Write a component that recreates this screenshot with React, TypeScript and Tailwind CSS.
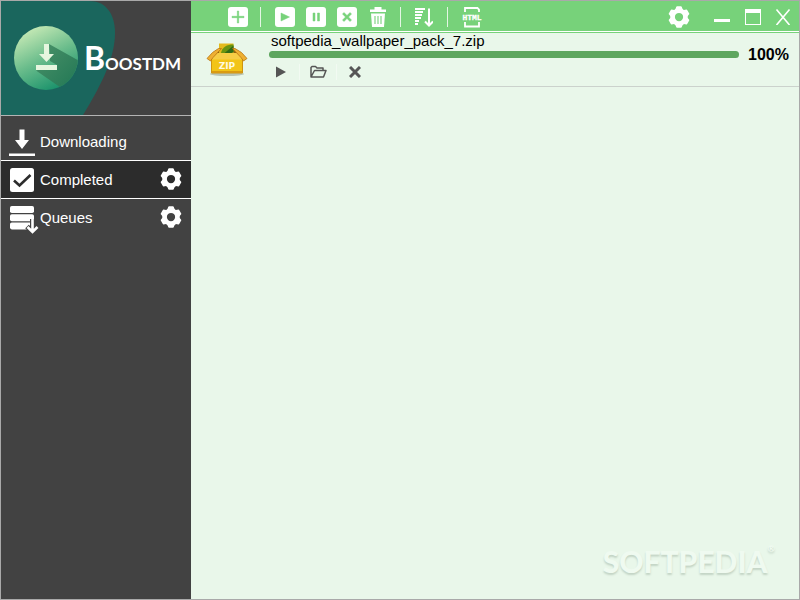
import { useState } from 'react';
import type { ReactNode } from 'react';

const FONT = "font-['Liberation_Sans',Arial,sans-serif]";

function GearIcon({ size, hole }: { size: number; hole: number }) {
  return (
    <svg width={size} height={size} viewBox="0 0 24 24" fill="none" stroke="currentColor">
      <circle cx="12" cy="12" r={(9.5 + hole) / 2} strokeWidth={9.5 - hole} />
      {[0, 60, 120, 180, 240, 300].map(deg => (
        <path
          key={deg}
          d="M9.8 1.2h4.4l1.6 4h-7.6z"
          fill="currentColor"
          strokeWidth="1.6"
          strokeLinejoin="round"
          transform={`rotate(${deg} 12 12)`}
        />
      ))}
    </svg>
  );
}

function LogoIcon() {
  return (
    <svg width="64" height="64" viewBox="0 0 64 64" className="shrink-0">
      <defs>
        <linearGradient id="disc" x1="0.15" y1="0.1" x2="0.6" y2="1">
          <stop offset="0" stopColor="#c3e8b4" />
          <stop offset="0.5" stopColor="#6bbd8c" />
          <stop offset="1" stopColor="#1c936c" />
        </linearGradient>
        <linearGradient id="shade" x1="0" y1="0" x2="1" y2="1">
          <stop offset="0" stopColor="#4b9269" />
          <stop offset="1" stopColor="#1e7553" />
        </linearGradient>
        <clipPath id="discClip"><circle cx="32" cy="32" r="32" /></clipPath>
      </defs>
      <circle cx="32" cy="32" r="32" fill="url(#disc)" />
      <path clipPath="url(#discClip)" d="M35 18l32 18v30H53L22 44.500 43 39l-7-4z" fill="url(#shade)" />
      <path d="M30 18h5v10h5l-7.500 8-7.500-8h5zM22 39h21v5H22z" fill="#e6f6df" />
    </svg>
  );
}

function DownloadIcon() {
  return (
    <svg width="28" height="28" viewBox="0 0 28 28" fill="currentColor">
      <path d="M11.500 1.500h5V12h4.500l-7 9-7-9h4.500zM1 25.500h26V28H1z" />
    </svg>
  );
}

function CheckIcon() {
  return (
    <svg width="28" height="28" viewBox="0 0 28 28">
      <rect x="2" y="2" width="24" height="24" rx="2.500" fill="#fff" />
      <path d="M6 14.500l5.500 5L22.500 9" fill="none" stroke="#2c2c2c" strokeWidth="2.600" />
    </svg>
  );
}

function QueueIcon() {
  return (
    <svg width="28" height="28" viewBox="0 0 28 28">
      <g fill="#fff">
        <rect x="2" y="2" width="24" height="7" rx="1.800" />
        <rect x="2" y="10.200" width="24" height="7" rx="1.800" />
        <rect x="2" y="18.400" width="22" height="7" rx="1.800" />
      </g>
      <path d="M24.500 15v12M19 22.500l5.500 5.500 5.500-5.500" fill="none" stroke="#424242" strokeWidth="5" />
      <path d="M24.500 14v14M19.500 23l5 5 5-5" fill="none" stroke="#fff" strokeWidth="2.600" />
    </svg>
  );
}

function ZipIcon() {
  return (
    <svg width="42" height="34" viewBox="0 0 42 34" className="shrink-0">
      <ellipse cx="21" cy="31" rx="17" ry="2" fill="#b9c5b4" />
      <path d="M7 13l7-7h14l7 7z" fill="#8f6410" />
      <path d="M13 0.500h14.500v11H13z" fill="#e3ba1c" />
      <path d="M15 10c1-6 6-8.500 12.500-8.500V9l-3 1.500h-8z" fill="#6a9410" />
      <path d="M18 10.500l9.500-8V9l-3 1.500z" fill="#2f6a17" />
      <path d="M5.500 14h31v16h-31z" fill="#f2c417" stroke="#cf9410" />
      <path d="M6 14l5-4h20l5 4v2.500H6z" fill="#f6cd45" />
      <path d="M12.500 5.500h3L7 14.500 4.500 18 1 15.500l5.500-6zM29 5.500h-2.500L35 14.500l2.500 3.500 3.500-2.500-5.500-6z" fill="#eeb033" stroke="#b97410" strokeWidth="0.800" />
      <path d="M6 28h30v2H6z" fill="#d99b12" />
      <text x="21" y="26" textAnchor="middle" fontFamily="DejaVu Sans, sans-serif" fontWeight="700" fontSize="9" fill="#fffbe0">ZIP</text>
    </svg>
  );
}

function ToolButton({ label, children }: { label: string; children: ReactNode }) {
  return (
    <button type="button" aria-label={label} className="flex size-5 shrink-0 cursor-pointer items-center justify-center">
      {children}
    </button>
  );
}

function Tile({ d }: { d: string }) {
  return (
    <svg width="20" height="20" viewBox="0 0 20 20">
      <rect width="20" height="20" rx="3" fill="#fff" />
      <path d={d} fill="#77d27a" stroke="#77d27a" strokeWidth="0.500" />
    </svg>
  );
}

const Separator = () => <span className="h-5 w-px shrink-0 bg-white/80" />;

const NAV = [
  { name: 'Downloading', icon: <DownloadIcon />, gear: false, row: 'h-[45px] pt-2' },
  { name: 'Completed', icon: <CheckIcon />, gear: true, row: 'h-[38px]' },
  { name: 'Queues', icon: <QueueIcon />, gear: true, row: 'h-[38px]' },
];

function Sidebar() {
  const [active, setActive] = useState('Completed');

  return (
    <aside className="flex w-[190px] shrink-0 flex-col bg-[#424242] text-white">
      <div className="relative flex h-[115px] items-center border-b border-[#b4b4b4] pl-[13px]">
        <svg width="115" height="114" viewBox="0 0 115 114" className="absolute top-0 left-0">
          <path d="M0 0h88c17 0 26 13 26 32 0 26-15 54-32 82H0z" fill="#1a665d" />
        </svg>
        <div className="relative flex items-center gap-1.5">
          <LogoIcon />
          <h1 className="flex items-baseline font-['Lato',sans-serif] leading-none">
            <span className="text-[32px] font-bold">B</span>
            <span className="text-[17px] font-bold">OOSTDM</span>
          </h1>
        </div>
      </div>

      <nav>
        <ul>
          {NAV.map(item => (
            <li
              key={item.name}
              className={`flex items-center pr-[9px] pl-[7px] ${item.row} ${item.name === 'Queues' ? '' : 'border-b border-white'} ${active === item.name ? 'bg-[#2c2c2c]' : ''}`}
            >
              <button
                type="button"
                onClick={() => setActive(item.name)}
                className="flex grow cursor-pointer items-center gap-1 text-left text-[15px] leading-5"
              >
                <span className="[&>svg]:overflow-visible">{item.icon}</span>
                {item.name}
              </button>
              {item.gear && (
                <button type="button" aria-label={`${item.name} settings`} className="cursor-pointer pb-0.5">
                  <GearIcon size={22} hole={4.5} />
                </button>
              )}
            </li>
          ))}
        </ul>
      </nav>
    </aside>
  );
}

function Toolbar() {
  return (
    <header className="flex h-8 shrink-0 items-center border-b border-[#77d27a] bg-[#77d27a] pr-2 pl-[37px] text-white shadow-[inset_0_-1px_0_#fff]">
      <ToolButton label="Add download"><Tile d="M9.300 4h1.400v5.300H16v1.400h-5.300V16H9.300v-5.300H4V9.300h5.300z" /></ToolButton>
      <div className="flex items-center gap-3 pl-3">
        <Separator />
        <div className="flex items-center gap-[11px] pl-0.5">
          <ToolButton label="Start"><Tile d="M6 6l8.500 4L6 14z" /></ToolButton>
          <ToolButton label="Pause"><Tile d="M7 6h2v8H7zM11.500 6h2v8h-2z" /></ToolButton>
          <ToolButton label="Cancel"><Tile d="M5.500 7L7 5.500l3 3 3-3L14.500 7l-3 3 3 3-1.500 1.500-3-3-3 3L5.500 13l3-3z" /></ToolButton>
          <ToolButton label="Delete">
            <svg width="18" height="20" viewBox="0 0 18 20" fill="#fff">
              <path d="M1 2.500h16v2.500H1zM5.500 0h7v3h-7z" />
              <path d="M2 6.500h14l-1 13.500H3z" />
              <path d="M6 9v8M9 9v8M12 9v8" stroke="#77d27a" strokeWidth="1.100" />
            </svg>
          </ToolButton>
        </div>
        <Separator />
        <div className="flex items-center gap-3.5">
          <ToolButton label="Sort">
            <svg width="20" height="20" viewBox="0 0 20 20" fill="none" stroke="#fff" className="shrink-0">
              <path d="M2 2h10M2 5h8M2 8h7M2 11h6M2 14h4M2 17h3" strokeWidth="2" />
              <path d="M16 1.500v17M12 14.500l4 4 4-4" strokeWidth="2" />
            </svg>
          </ToolButton>
          <Separator />
          <ToolButton label="Grab from HTML">
            <svg width="20" height="22" viewBox="0 0 20 22" fill="none" className="shrink-0 overflow-visible">
              <path d="M3 6V2h12.500L17 3.500V6M3 16v4.500h14V16" stroke="#fff" strokeWidth="1.800" />
              <text x="10" y="14" textAnchor="middle" fontFamily="Liberation Mono, monospace" fontWeight="700" fontSize="8" fill="#fff" stroke="#fff" strokeWidth="0.300">HTML</text>
            </svg>
          </ToolButton>
        </div>
      </div>

      <div className="ml-auto flex items-center">
        <button type="button" aria-label="Settings" className="mr-6 cursor-pointer"><GearIcon size={22} hole={4.5} /></button>
        <div className="flex items-center gap-3.5">
          <button type="button" aria-label="Minimize" className="cursor-pointer">
            <svg width="17" height="16" viewBox="0 0 17 16"><path d="M0 10h16v3H0z" fill="#fff" /></svg>
          </button>
          <button type="button" aria-label="Maximize" className="cursor-pointer">
            <svg width="16" height="16" viewBox="0 0 16 16"><path d="M0 0h16v16H0zM1 4v11h14V4z" fill="#fff" fillRule="evenodd" /></svg>
          </button>
          <button type="button" aria-label="Close" className="cursor-pointer">
            <svg width="16" height="16" viewBox="0 0 16 16"><path d="M1.500 0.500l13 15.500M14.500 0.500l-13 15.500" stroke="#fff" strokeWidth="1.600" /></svg>
          </button>
        </div>
      </div>
    </header>
  );
}

function DownloadRow({ name, progress }: { name: string; progress: number }) {
  return (
    <li className="flex h-[54px] items-start border-b border-[#cbd2cc] pr-2.5 pl-[15px]">
      <div className="pt-2.5"><ZipIcon /></div>
      <div className="flex min-w-0 grow flex-col pl-[21px]">
        <div className="mb-0.5 pl-0.5 text-[15px] leading-4 whitespace-nowrap">{name}</div>
        <div className="flex h-[7px] items-center gap-2">
          <div
            role="progressbar"
            aria-label={name}
            aria-valuenow={progress}
            className="h-[7px] grow rounded-sm bg-[#d2e6d4]"
          >
            <div className="h-full rounded-sm bg-[#5ea65f]" style={{ width: `${progress}%` }} />
          </div>
          <span className="w-[42px] text-right text-[16px] leading-4 font-bold">{progress}%</span>
        </div>
        <div className="flex items-center gap-2.5 pt-1.5 pl-1 text-[#555]">
          <button type="button" aria-label="Open file" className="flex h-4 w-4 cursor-pointer items-center justify-center">
            <svg width="10" height="12" viewBox="0 0 10 12"><path d="M0 0.500l10 5.500-10 5.500z" fill="currentColor" /></svg>
          </button>
          <span className="h-4 w-px bg-white/40" />
          <button type="button" aria-label="Open folder" className="flex h-4 w-4 cursor-pointer items-center justify-center">
            <svg width="17" height="14" viewBox="0 0 17 14" className="shrink-0">
              <path d="M1 12V2.500l1-1h3.500L7 3h6v2.500M1 12l3.500-6.500H16L13.500 12z" fill="none" stroke="currentColor" strokeWidth="1.500" strokeLinejoin="round" />
            </svg>
          </button>
          <span className="h-4 w-px bg-white/40" />
          <button type="button" aria-label="Remove" className="flex h-4 w-4 cursor-pointer items-center justify-center">
            <svg width="12" height="12" viewBox="0 0 12 12"><path d="M1 1l10 10M11 1L1 11" stroke="currentColor" strokeWidth="3" /></svg>
          </button>
        </div>
      </div>
    </li>
  );
}

export default function App() {
  return (
    <div className={`flex h-screen border border-[#a9a9a9] bg-[#e9f7ea] text-black ${FONT}`}>
      <Sidebar />
      <main className="flex min-w-0 grow flex-col">
        <Toolbar />
        <ul>
          <DownloadRow name="softpedia_wallpaper_pack_7.zip" progress={100} />
        </ul>
        <div className="mt-auto flex items-start justify-end pr-6 pb-5 font-['Lato',sans-serif] font-black text-[#effaf0] select-none [text-shadow:0_2px_2px_#c3d4c5]">
          <span className="text-[30px] leading-9">SOFTPEDIA</span>
          <span className="text-[9px] leading-3">®</span>
        </div>
      </main>
    </div>
  );
}
